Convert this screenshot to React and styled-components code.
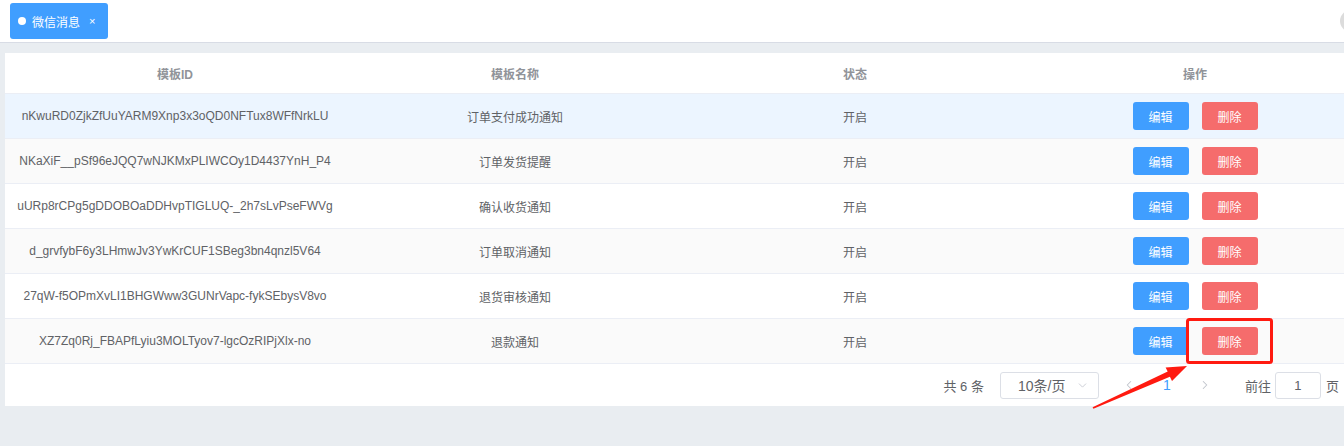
import styled, { createGlobalStyle } from "styled-components";
import { ChevronDown, ChevronLeft, ChevronRight } from "lucide-react";

const GlobalStyle = createGlobalStyle`
  html, body {
    margin: 0;
    padding: 0;
    overflow: hidden;
    background: #e9edf1;
    font-family: "Liberation Sans", "Noto Sans CJK SC", sans-serif;
  }
`;

const rows = [
  { id: "nKwuRD0ZjkZfUuYARM9Xnp3x3oQD0NFTux8WFfNrkLU", name: "订单支付成功通知" },
  { id: "NKaXiF__pSf96eJQQ7wNJKMxPLIWCOy1D4437YnH_P4", name: "订单发货提醒" },
  { id: "uURp8rCPg5gDDOBOaDDHvpTIGLUQ-_2h7sLvPseFWVg", name: "确认收货通知" },
  { id: "d_grvfybF6y3LHmwJv3YwKrCUF1SBeg3bn4qnzl5V64", name: "订单取消通知" },
  { id: "27qW-f5OPmXvLI1BHGWww3GUNrVapc-fykSEbysV8vo", name: "退货审核通知" },
  { id: "XZ7Zq0Rj_FBAPfLyiu3MOLTyov7-lgcOzRIPjXlx-no", name: "退款通知" },
];

const App = () => {
  return (
    <Page>
      <GlobalStyle />
      <TabBar>
        <Tab>
          <Dot />
          <span>微信消息</span>
          <Close>×</Close>
        </Tab>
        <Avatar />
      </TabBar>
      <Main>
        <Card>
          <HeadRow>
            <HeadCell>模板ID</HeadCell>
            <HeadCell>模板名称</HeadCell>
            <HeadCell>状态</HeadCell>
            <HeadCell>操作</HeadCell>
          </HeadRow>
          {rows.map((r, i) => (
            <Row key={r.id} $hover={i === 0} $striped={i % 2 === 1}>
              <Cell>{r.id}</Cell>
              <Cell>{r.name}</Cell>
              <Cell>开启</Cell>
              <Cell>
                <Actions>
                  <Button $type="primary">编辑</Button>
                  <Button $type="danger">删除</Button>
                </Actions>
              </Cell>
            </Row>
          ))}
          <Pagination>
            <Total>共 6 条</Total>
            <SizeSelect>
              <span>10条/页</span>
              <ChevronDown size={13} strokeWidth={1.5} color="#c0c4cc" />
            </SizeSelect>
            <PageBtn>
              <ChevronLeft size={14} strokeWidth={1.8} color="#c0c4cc" />
            </PageBtn>
            <PageBtn $active>1</PageBtn>
            <PageBtn>
              <ChevronRight size={14} strokeWidth={1.8} color="#c0c4cc" />
            </PageBtn>
            <Jumper>
              前往
              <JumpInput>1</JumpInput>
              页
            </Jumper>
          </Pagination>
        </Card>
      </Main>
      <Annotation width="1344" height="446" viewBox="0 0 1344 446">
        <rect x="1187.5" y="319.5" width="84" height="43" rx="2" fill="none" stroke="#ff1a10" strokeWidth="3" />
        <polygon
          points="1092.6,407.2 1167.7,371.6 1165.6,367.4 1187,366 1172,381 1169.9,376.8 1093.4,408.8"
          fill="#ff1a10"
        />
      </Annotation>
    </Page>
  );
};

const Page = styled.div`
  position: relative;
  width: 1344px;
  height: 446px;
  overflow: hidden;
  background: #e9edf1;
`;

const TabBar = styled.div`
  height: 42px;
  background: #fff;
  border-bottom: 1px solid #d8dce5;
  display: flex;
  align-items: flex-start;
  justify-content: space-between;
  overflow: hidden;
`;

const Tab = styled.div`
  margin: 3px 0 0 10px;
  height: 36px;
  padding: 0 13px 0 8px;
  background: #409eff;
  border-radius: 3px;
  color: #fff;
  font-size: 12px;
  display: flex;
  align-items: center;
`;

const Dot = styled.i`
  width: 8px;
  height: 8px;
  border-radius: 50%;
  background: #fff;
  margin-right: 6px;
`;

const Close = styled.span`
  margin-left: 9px;
  font-size: 11px;
  line-height: 1;
`;

const Avatar = styled.div`
  width: 22px;
  height: 22px;
  margin: 10px -18px 0 0;
  border-radius: 50%;
  background: #dcdcdc;
`;

const Main = styled.div`
  padding: 10px 0 0 5px;
`;

const Card = styled.div`
  width: 1360px;
  background: #fff;
`;

const HeadRow = styled.div`
  display: grid;
  grid-template-columns: repeat(4, 340px);
  height: 41px;
  border-bottom: 1px solid #ebeef5;
  box-sizing: border-box;
`;

const HeadCell = styled.div`
  display: flex;
  align-items: center;
  justify-content: center;
  color: #909399;
  font-size: 12px;
  font-weight: 600;
`;

const Row = styled.div`
  display: grid;
  grid-template-columns: repeat(4, 340px);
  height: 45px;
  box-sizing: border-box;
  border-bottom: 1px solid #ebeef5;
  background: ${(p) => (p.$hover ? "#ecf5ff" : p.$striped ? "#fafafa" : "#fff")};
`;

const Cell = styled.div`
  display: flex;
  align-items: center;
  justify-content: center;
  color: #606266;
  font-size: 12px;
  white-space: nowrap;
`;

const Actions = styled.div`
  display: flex;
  gap: 13px;
`;

const Button = styled.div`
  width: 56px;
  height: 28px;
  border-radius: 3px;
  display: flex;
  align-items: center;
  justify-content: center;
  color: #fff;
  font-size: 12px;
  background: ${(p) => (p.$type === "danger" ? "#f56c6c" : "#409eff")};
`;

const Pagination = styled.div`
  height: 42px;
  display: flex;
  align-items: center;
  justify-content: flex-end;
  padding-right: 26px;
  color: #606266;
  font-size: 13px;
`;

const Total = styled.span`
  margin-right: 16px;
`;

const SizeSelect = styled.div`
  width: 99px;
  height: 27px;
  box-sizing: border-box;
  border: 1px solid #dcdfe6;
  border-radius: 3px;
  display: flex;
  align-items: center;
  justify-content: space-between;
  padding: 0 9px 0 17px;
  margin-right: 11px;
  font-size: 14px;
`;

const PageBtn = styled.div`
  width: 38px;
  height: 28px;
  display: flex;
  align-items: center;
  justify-content: center;
  color: ${(p) => (p.$active ? "#409eff" : "#c0c4cc")};
  font-size: 14px;
`;

const Jumper = styled.div`
  margin-left: 21px;
  display: flex;
  align-items: center;
`;

const JumpInput = styled.div`
  width: 46px;
  height: 27px;
  box-sizing: border-box;
  border: 1px solid #dcdfe6;
  border-radius: 3px;
  margin: 0 5px 0 4px;
  display: flex;
  align-items: center;
  justify-content: center;
`;

const Annotation = styled.svg`
  position: absolute;
  left: 0;
  top: 0;
  pointer-events: none;
`;

export default App;
